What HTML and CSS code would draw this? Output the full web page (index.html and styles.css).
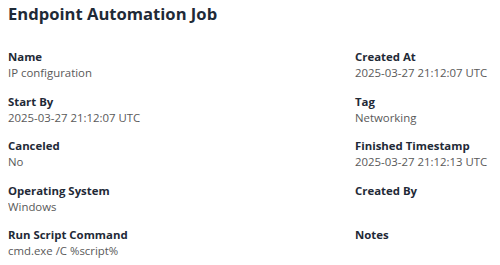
FILE: index.html
```html
<!DOCTYPE html>
<html>
<head>
    <title>Endpoint Automation Job</title>
    <link rel="stylesheet" href="styles.css">
</head>
<body>
    <div class="job">
        <h2 class="job-title">Endpoint Automation Job</h2>
        <div class="fields">
            <div class="field">
                <div class="label">Name</div>
                <div class="value">IP configuration</div>
            </div>
            <div class="field">
                <div class="label">Created At</div>
                <div class="value">2025-03-27 21:12:07 UTC</div>
            </div>
            <div class="field">
                <div class="label">Start By</div>
                <div class="value">2025-03-27 21:12:07 UTC</div>
            </div>
            <div class="field">
                <div class="label">Tag</div>
                <div class="value">Networking</div>
            </div>
            <div class="field">
                <div class="label">Canceled</div>
                <div class="value">No</div>
            </div>
            <div class="field">
                <div class="label">Finished Timestamp</div>
                <div class="value">2025-03-27 21:12:13 UTC</div>
            </div>
            <div class="field">
                <div class="label">Operating System</div>
                <div class="value clipped">Windows</div>
            </div>
            <div class="field">
                <div class="label">Created By</div>
                <div class="value"></div>
            </div>
            <div class="field">
                <div class="label">Run Script Command</div>
                <div class="value">cmd.exe /C %script%</div>
            </div>
            <div class="field">
                <div class="label">Notes</div>
                <div class="value"></div>
            </div>
        </div>
    </div>
</body>
</html>
```

FILE: styles.css
```css
body {
    font-family: "Open Sans", Arial, sans-serif;
    background-color: #fff;
    margin: 0;
    padding: 0;
}
.job {
    padding: 2px 8px 0 8px;
}
.job-title {
    font-size: 16.6px;
    font-weight: 700;
    line-height: 24px;
    color: #1f2a37;
    margin: 0 0 23px 0;
}
.fields {
    display: grid;
    grid-template-columns: 347px 1fr;
    row-gap: 12.5px;
}
.field {
    min-height: 32px;
    white-space: nowrap;
}
.label {
    font-size: 11.4px;
    font-weight: 700;
    line-height: 16px;
    color: #1f2a37;
}
.value {
    font-size: 11.4px;
    line-height: 16px;
    color: #595959;
    min-height: 16px;
}
.value.clipped {
    height: 12px;
    overflow: hidden;
}
```
